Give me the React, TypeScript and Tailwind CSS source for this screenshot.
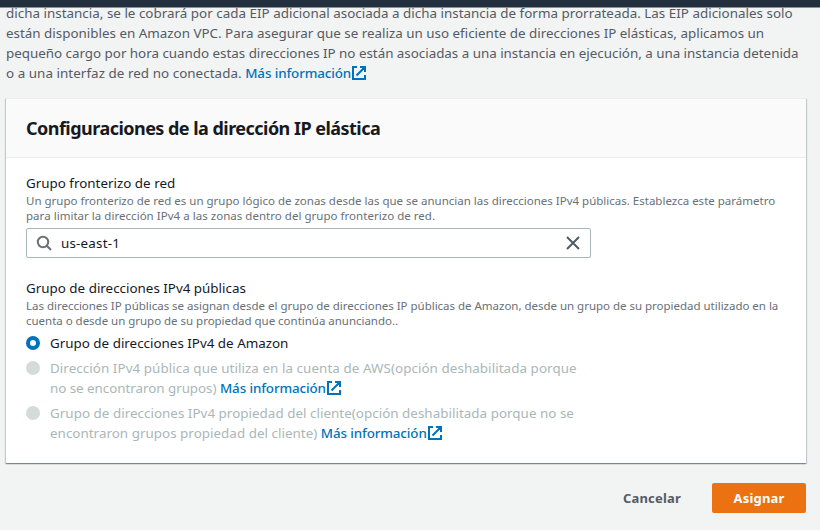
import React from "react";

function Ext() {
  return (
    <svg className="ml-px inline-block h-[14px] w-[14px] align-[-2px]" viewBox="0 0 14 14" fill="none" stroke="#0073bb" strokeWidth="2">
      <path d="M5 1H1v12h12V9M8 1h5v5M12.5 1.5L4.5 9.5" />
      <path d="M9 1h4v4z" fill="#0073bb" stroke="none" />
    </svg>
  );
}

function More() {
  return (
    <a className="whitespace-nowrap font-medium tracking-[-0.12px] text-[#0073bb]">
      Más información
      <Ext />
    </a>
  );
}

function Radio({ on }: { on?: boolean }) {
  return on ? (
    <span className="mt-[3px] h-[14px] w-[14px] shrink-0 rounded-full border-[4px] border-[#0073bb] bg-white" />
  ) : (
    <span className="mt-[3px] h-[14px] w-[14px] shrink-0 rounded-full bg-[#d5dbdb]" />
  );
}

export default function App() {
  return (
    <div className="h-[530px] w-[820px] overflow-hidden bg-[#f2f3f3] font-['Noto_Sans',sans-serif] text-[13.4px] leading-5 text-[#16191f]">
      <header className="relative z-10 h-2 border-b border-[#8b9198] bg-[#232f3e]" />
      <div className="-mt-[5px] h-20 whitespace-nowrap pl-[6px] text-[#545b64]">
        <p className="tracking-[0.016px]">dicha instancia, se le cobrará por cada EIP adicional asociada a dicha instancia de forma prorrateada. Las EIP adicionales solo</p>
        <p>están disponibles en Amazon VPC. Para asegurar que se realiza un uso eficiente de direcciones IP elásticas, aplicamos un</p>
        <p className="tracking-[-0.02px]">pequeño cargo por hora cuando estas direcciones IP no están asociadas a una instancia en ejecución, a una instancia detenida</p>
        <p className="tracking-[0.05px]">o a una interfaz de red no conectada. <More /></p>
      </div>
      <main className="ml-[6px] mt-[15px] h-[365px] w-[800px] whitespace-nowrap border-t border-[#eaeded] bg-white shadow-[0_1px_1px_0_rgba(0,28,36,0.3),1px_1px_1px_0_rgba(0,28,36,0.15),-1px_1px_1px_0_rgba(0,28,36,0.15)]">
        <h2 className="h-[59px] border-b border-[#eaeded] bg-[#fafafa] px-5 pt-[18px] text-[18px] font-bold leading-[22px] tracking-[-0.53px]">
          Configuraciones de la dirección IP elástica
        </h2>
        <div className="px-5 pt-[15px]">
          <label className="block">Grupo fronterizo de red</label>
          <div className="text-[11.5px] leading-[15px] text-[#687078]">
            <p>Un grupo fronterizo de red es un grupo lógico de zonas desde las que se anuncian las direcciones IPv4 públicas. Establezca este parámetro</p>
            <p className="tracking-[0.03px]">para limitar la dirección IPv4 a las zonas dentro del grupo fronterizo de red.</p>
          </div>
          <div className="mt-[5px] flex h-[30px] w-[565px] items-center rounded-[2px] border border-[#aab7b8] bg-white px-[9px]">
            <svg className="h-4 w-4" viewBox="0 0 16 16" fill="none" stroke="#687078" strokeWidth="2">
              <circle cx="7" cy="7" r="5.2" />
              <path d="M10.8 10.8L15 15" />
            </svg>
            <span className="ml-[9px] flex-1 tracking-[0.2px]">us-east-1</span>
            <svg className="h-4 w-4" viewBox="0 0 16 16" fill="none" stroke="#545b64" strokeWidth="2">
              <path d="M2 2l12 12M14 2L2 14" />
            </svg>
          </div>
          <label className="mt-5 block">Grupo de direcciones IPv4 públicas</label>
          <div className="text-[11.5px] leading-[15px] text-[#687078]">
            <p className="tracking-[-0.017px]">Las direcciones IP públicas se asignan desde el grupo de direcciones IP públicas de Amazon, desde un grupo de su propiedad utilizado en la</p>
            <p className="tracking-[-0.02px]">cuenta o desde un grupo de su propiedad que continúa anunciando..</p>
          </div>
          <div className="mt-[5px] flex flex-col gap-[5px] text-[#aab7b8]">
            <div className="flex gap-[10px]">
              <Radio on />
              <p className="text-[#16191f]">Grupo de direcciones IPv4 de Amazon</p>
            </div>
            <div className="flex gap-[10px]">
              <Radio />
              <div>
                <p className="tracking-[0.065px]">Dirección IPv4 pública que utiliza en la cuenta de AWS(opción deshabilitada porque</p>
                <p className="tracking-[-0.04px]">no se encontraron grupos) <More /></p>
              </div>
            </div>
            <div className="flex gap-[10px]">
              <Radio />
              <div>
                <p className="tracking-[0.028px]">Grupo de direcciones IPv4 propiedad del cliente(opción deshabilitada porque no se</p>
                <p className="tracking-[0.025px]">encontraron grupos propiedad del cliente) <More /></p>
              </div>
            </div>
          </div>
        </div>
      </main>
      <footer className="mr-[14px] mt-5 flex justify-end text-[13px] font-bold tracking-[0.2px]">
        <button className="h-[30px] px-[31px] text-[#545b64]">Cancelar</button>
        <button className="h-[30px] w-[94px] rounded-[2px] bg-[#ec7211] text-white">Asignar</button>
      </footer>
    </div>
  );
}
